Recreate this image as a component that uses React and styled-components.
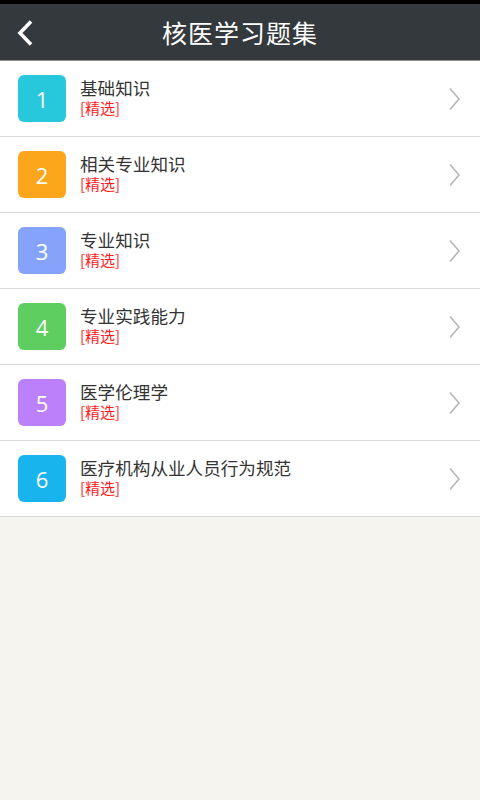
import React from "react";
import styled, { createGlobalStyle } from "styled-components";

const GlobalStyle = createGlobalStyle`
  html, body {
    margin: 0;
    padding: 0;
    background: #f6f4ee;
    font-family: "Noto Sans CJK SC", "Noto Sans", sans-serif;
  }
`;

const Page = styled.div`
  width: 480px;
  min-height: 800px;
  background: #f6f4ee;
`;

const StatusStrip = styled.div`
  height: 4px;
  background: #000;
`;

const Header = styled.div`
  position: relative;
  height: 56px;
  background: #33393c;
  border-bottom: 1px solid #8a8d8e;
  display: flex;
  align-items: center;
  justify-content: center;
`;

const BackButton = styled.div`
  position: absolute;
  left: 12px;
  top: 14px;
  width: 26px;
  height: 30px;
  display: flex;
  align-items: center;
  justify-content: center;
`;

const Title = styled.h1`
  margin: 0;
  color: #fff;
  font-size: 25px;
  font-weight: 400;
  letter-spacing: 1px;
`;

const List = styled.ul`
  list-style: none;
  margin: 0;
  padding: 0;
  background: #fff;
`;

const Row = styled.li`
  height: 75px;
  border-bottom: 1px solid #d9d9d9;
  display: flex;
  align-items: center;
  padding: 0 18px;
  box-sizing: content-box;
`;

const Badge = styled.div`
  width: 48px;
  height: 47px;
  border-radius: 6px;
  background: ${(p) => p.color};
  color: #fff;
  font-family: "Open Sans", "Noto Sans", sans-serif;
  font-size: 22px;
  display: flex;
  align-items: center;
  justify-content: center;
  flex-shrink: 0;
`;

const Texts = styled.div`
  flex: 1;
  margin-left: 14px;
  display: flex;
  flex-direction: column;
  padding-bottom: 5px;
`;

const Name = styled.div`
  font-size: 17.6px;
  line-height: 22px;
  color: #333;
`;

const Tag = styled.div`
  font-size: 15px;
  line-height: 17px;
  color: #ff1e1e;
`;

const Chevron = () => (
  <svg width="14" height="24" viewBox="0 0 14 24">
    <path d="M2 1.5 L11 12 L2 22.5" fill="none" stroke="#b8b8b8" strokeWidth="1.7" />
  </svg>
);

const items = [
  { n: 1, name: "基础知识", color: "#27c8db" },
  { n: 2, name: "相关专业知识", color: "#fba61b" },
  { n: 3, name: "专业知识", color: "#86a3fb" },
  { n: 4, name: "专业实践能力", color: "#5dce5f" },
  { n: 5, name: "医学伦理学", color: "#bc80fa" },
  { n: 6, name: "医疗机构从业人员行为规范", color: "#18b4ee" },
];

export default function App() {
  return (
    <Page>
      <GlobalStyle />
      <StatusStrip />
      <Header>
        <BackButton>
          <svg width="20" height="28" viewBox="0 0 20 28">
            <path d="M16 2.5 L5 14 L16 25.5" fill="none" stroke="#fff" strokeWidth="3.6" />
          </svg>
        </BackButton>
        <Title>核医学习题集</Title>
      </Header>
      <List>
        {items.map((it) => (
          <Row key={it.n}>
            <Badge color={it.color}>{it.n}</Badge>
            <Texts>
              <Name>{it.name}</Name>
              <Tag>[精选]</Tag>
            </Texts>
            <Chevron />
          </Row>
        ))}
      </List>
    </Page>
  );
}
